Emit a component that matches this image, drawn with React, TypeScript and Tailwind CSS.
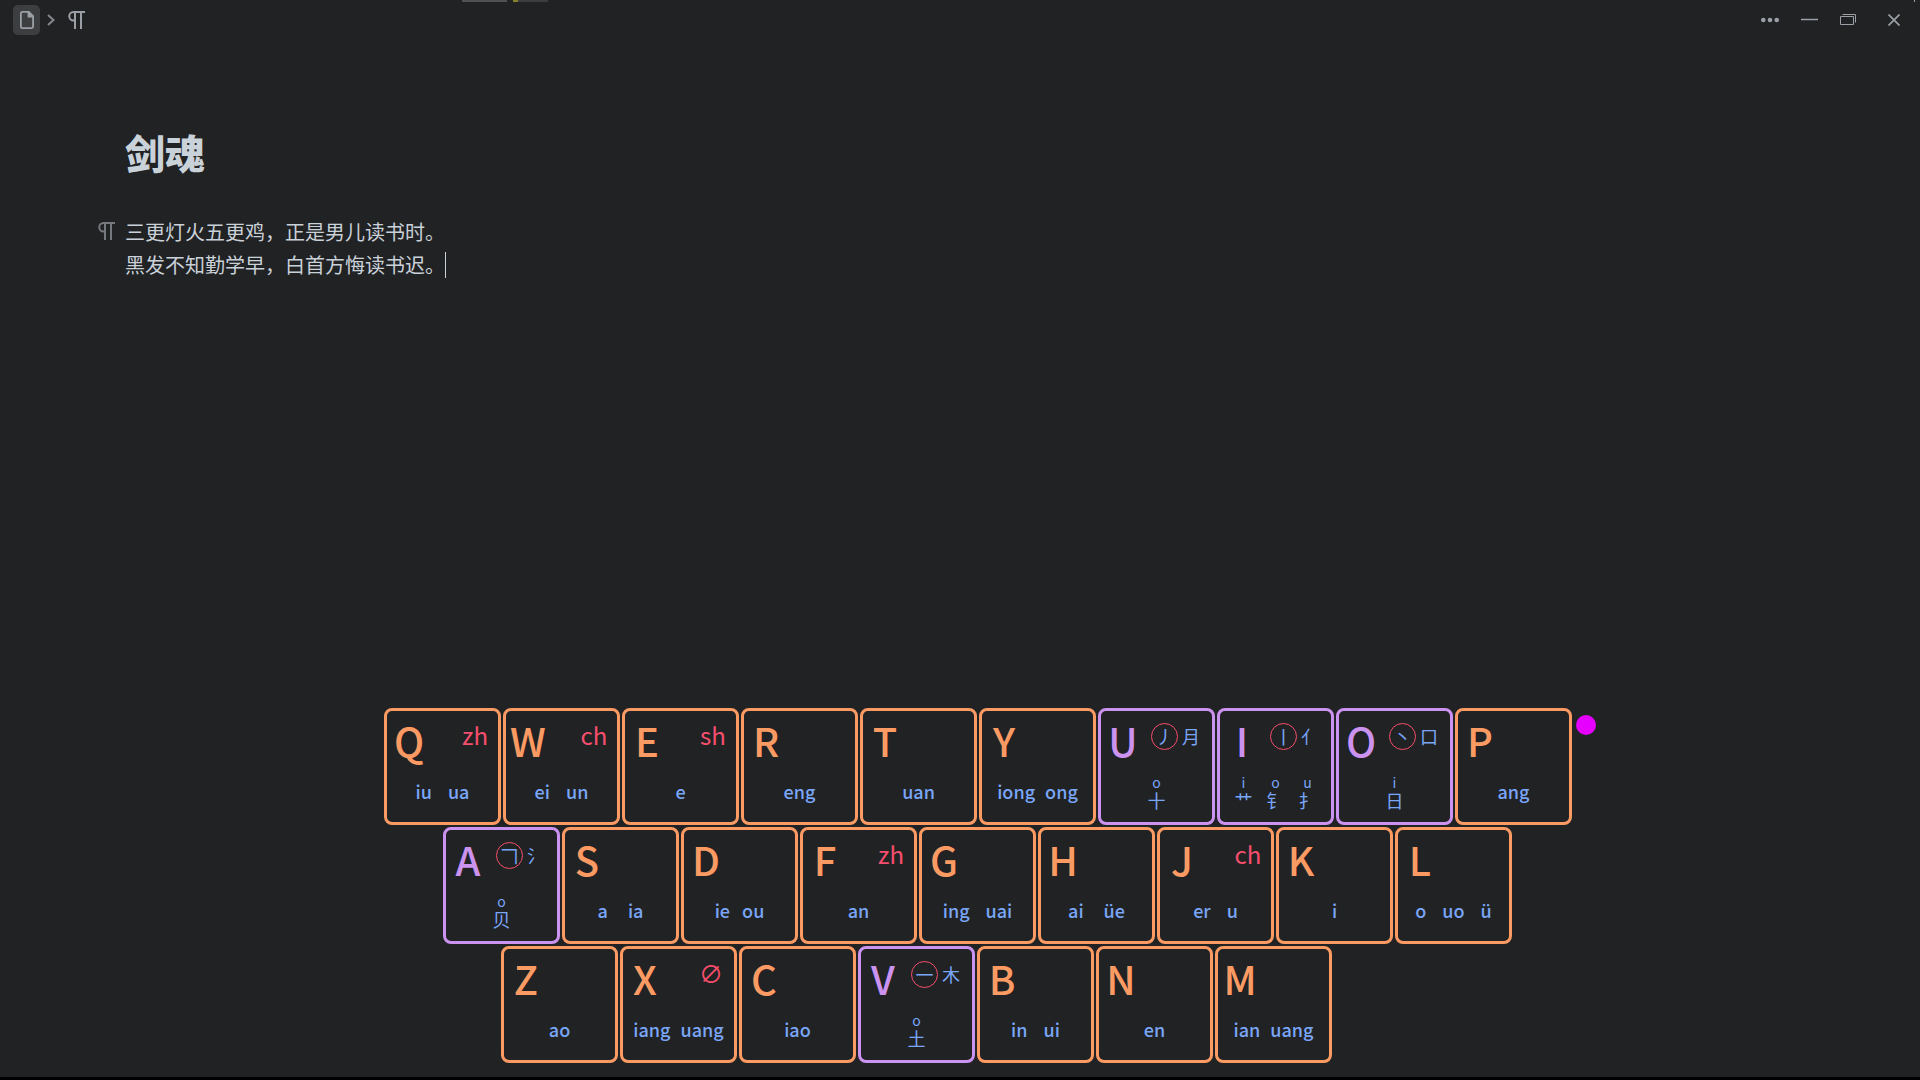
import React from "react";

type Radical = { sound: string; glyph: string };
type KeyDef = {
  letter: string;
  initial?: string;
  finals?: string[];
  gap?: string;
  stroke?: string;
  side?: string;
  radicals?: Radical[];
};

const rows: { indent: string; keys: KeyDef[] }[] = [
  {
    indent: "",
    keys: [
      { letter: "Q", initial: "zh", finals: ["iu", "ua"], gap: "gap-4" },
      { letter: "W", initial: "ch", finals: ["ei", "un"], gap: "gap-4" },
      { letter: "E", initial: "sh", finals: ["e"] },
      { letter: "R", finals: ["eng"] },
      { letter: "T", finals: ["uan"] },
      { letter: "Y", finals: ["iong", "ong"], gap: "gap-2.5" },
      { letter: "U", stroke: "丿", side: "月", radicals: [{ sound: "o", glyph: "十" }] },
      {
        letter: "I",
        stroke: "丨",
        side: "亻",
        radicals: [
          { sound: "i", glyph: "艹" },
          { sound: "o", glyph: "钅" },
          { sound: "u", glyph: "扌" },
        ],
      },
      { letter: "O", stroke: "丶", side: "口", radicals: [{ sound: "i", glyph: "日" }] },
      { letter: "P", finals: ["ang"] },
    ],
  },
  {
    indent: "pl-[59px]",
    keys: [
      { letter: "A", stroke: "𠃍", side: "氵", radicals: [{ sound: "o", glyph: "贝" }] },
      { letter: "S", finals: ["a", "ia"], gap: "gap-5" },
      { letter: "D", finals: ["ie", "ou"], gap: "gap-3" },
      { letter: "F", initial: "zh", finals: ["an"] },
      { letter: "G", finals: ["ing", "uai"], gap: "gap-4" },
      { letter: "H", finals: ["ai", "üe"], gap: "gap-5" },
      { letter: "J", initial: "ch", finals: ["er", "u"], gap: "gap-4" },
      { letter: "K", finals: ["i"] },
      { letter: "L", finals: ["o", "uo", "ü"], gap: "gap-4" },
    ],
  },
  {
    indent: "pl-[117px]",
    keys: [
      { letter: "Z", finals: ["ao"] },
      { letter: "X", initial: "∅", finals: ["iang", "uang"], gap: "gap-2.5" },
      { letter: "C", finals: ["iao"] },
      { letter: "V", stroke: "一", side: "木", radicals: [{ sound: "o", glyph: "土" }] },
      { letter: "B", finals: ["in", "ui"], gap: "gap-4" },
      { letter: "N", finals: ["en"] },
      { letter: "M", finals: ["ian", "uang"], gap: "gap-2.5" },
    ],
  },
];

function Pilcrow({ className }: { className: string }) {
  return (
    <svg viewBox="0 0 17 18" className={className} fill="none" stroke="currentColor" strokeWidth="2" aria-hidden="true">
      <path d="M17 1H5.5a4 4 0 0 0 0 8.5H7M7 1v17M13 1v17" />
    </svg>
  );
}

function Key({ def }: { def: KeyDef }) {
  const special = Boolean(def.stroke);
  return (
    <div
      className={
        special
          ? "h-[117px] w-[117px] shrink-0 rounded-lg border-3 border-[#cc92f0] text-[#7aa6f8]"
          : "h-[117px] w-[117px] shrink-0 rounded-lg border-3 border-[#fb9b63] text-[#7aa6f8]"
      }
    >
      <div className="flex h-[62px] items-start">
        <span
          className={
            special
              ? "flex w-11 justify-center text-[40px] leading-[58px] font-medium text-[#cc92f0]"
              : "flex w-11 justify-center text-[40px] leading-[58px] font-medium text-[#fb9b63]"
          }
        >
          {def.letter}
        </span>
        {def.initial && (
          <span className="ml-[23px] w-[42px] text-center text-2xl leading-[48px] text-[#f84e6e]">{def.initial}</span>
        )}
        {def.stroke && (
          <>
            <span className="mt-3 ml-1.5 flex h-[27px] w-[27px] items-center justify-center rounded-full border border-[#f84e6e] text-lg leading-[25px]">
              {def.stroke}
            </span>
            <span className="ml-1 w-[18px] text-lg leading-[50px]">{def.side}</span>
          </>
        )}
      </div>
      {def.finals && (
        <div className={`flex justify-center text-lg leading-[36px] font-medium ${def.gap ?? ""}`}>
          {def.finals.map((f) => (
            <span key={f}>{f}</span>
          ))}
        </div>
      )}
      {def.radicals && (
        <div className="flex justify-center gap-3.5">
          {def.radicals.map((r) => (
            <span key={r.glyph} className="flex w-[18px] flex-col items-center">
              <span className="text-sm leading-[18px]">{r.sound}</span>
              <span className="text-lg leading-[18px]">{r.glyph}</span>
            </span>
          ))}
        </div>
      )}
    </div>
  );
}

export default function App() {
  return (
    <div className="flex min-h-screen flex-col border-b-3 border-black bg-[#212224] font-['Noto_Sans_CJK_SC',sans-serif] text-[#c9d1d9]">
      <header className="relative flex h-10 items-center justify-between pr-5 pl-[13px] text-[#9aa0a6]">
        <div className="absolute top-0 left-[462px] flex h-0.5">
          <span className="mr-1.5 w-[45px] bg-[#505153]" />
          <span className="w-[5px] bg-[#85802a]" />
          <span className="w-[30px] bg-[#3c3d40]" />
        </div>
        <span className="absolute top-0 right-[5px] h-0.5 w-px bg-[#9aa0a6]" />
        <nav className="flex items-center" aria-label="Breadcrumb">
          <button type="button" aria-label="Document" className="flex h-[30px] w-[27px] items-center justify-center rounded-[5px] bg-[#3d3e40]">
            <svg viewBox="0 0 14 18" className="h-[18px] w-3.5" fill="none" stroke="currentColor" strokeWidth="1.8" aria-hidden="true">
              <path d="M2.3.9h6.4l4.4 4.4v10.3a1.5 1.5 0 0 1-1.5 1.5H2.3A1.4 1.4 0 0 1 .9 15.7V2.3A1.4 1.4 0 0 1 2.3.9z" />
              <path d="M8.5.9v4.6h4.6z" fill="currentColor" />
            </svg>
          </button>
          <svg viewBox="0 0 8 12" className="ml-[7px] h-3 w-2 text-[#84888c]" fill="none" stroke="currentColor" strokeWidth="2" aria-hidden="true">
            <path d="M1 1l5.5 5L1 11" />
          </svg>
          <button type="button" aria-label="Paragraph" className="ml-[13px]">
            <Pilcrow className="h-[18px] w-[17px]" />
          </button>
        </nav>
        <div className="flex items-center">
          <button type="button" aria-label="More">
            <svg viewBox="0 0 18 6" className="h-1.5 w-[18px]" fill="currentColor">
              <circle cx="2.3" cy="3" r="2.3" />
              <circle cx="9" cy="3" r="2.3" />
              <circle cx="15.7" cy="3" r="2.3" />
            </svg>
          </button>
          <button type="button" aria-label="Minimize" className="ml-[22px]">
            <svg viewBox="0 0 17 12" className="h-3 w-[17px]" stroke="currentColor" strokeWidth="1.5">
              <path d="M0 5.5h17" />
            </svg>
          </button>
          <button type="button" aria-label="Restore" className="ml-[22px]">
            <svg viewBox="0 0 16 12" className="h-3 w-4" fill="none" stroke="currentColor">
              <path d="M.5 2.5h13v8H.5zM2.5.5h13v8" />
            </svg>
          </button>
          <button type="button" aria-label="Close" className="ml-8">
            <svg viewBox="0 0 12 12" className="h-3 w-3" stroke="currentColor" strokeWidth="1.7">
              <path d="M.5.5l11 11M11.5.5l-11 11" />
            </svg>
          </button>
        </div>
      </header>

      <main className="px-[125px] pt-[84px]">
        <h1 className="text-[40px] leading-[56px] font-black">剑魂</h1>
        <div className="relative mt-[35px] text-xl leading-[33px]">
          <Pilcrow className="absolute top-1.5 -left-[27px] h-5 w-[17px] text-[#75797d]" />
          <p>三更灯火五更鸡，正是男儿读书时。</p>
          <p className="flex items-center">
            黑发不知勤学早，白首方悔读书迟。
            <span className="h-[26px] w-px bg-[#c9d1d9]" />
          </p>
        </div>
      </main>

      <section aria-label="Keyboard layout" className="mt-auto flex justify-center pb-3.5 pl-9">
        <div className="relative flex flex-col gap-0.5">
          <span className="absolute top-[7px] -right-6 h-5 w-5 rounded-full bg-[#e600ff]" />
          {rows.map((row, i) => (
            <div key={i} className={`flex gap-0.5 ${row.indent}`}>
              {row.keys.map((k) => (
                <Key key={k.letter} def={k} />
              ))}
            </div>
          ))}
        </div>
      </section>
    </div>
  );
}
